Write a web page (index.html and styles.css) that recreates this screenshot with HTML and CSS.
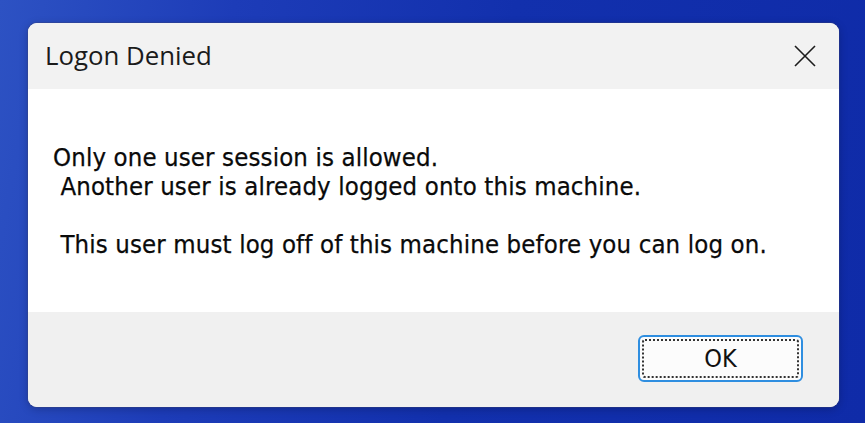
FILE: index.html
```html
<!DOCTYPE html>
<html lang="en">
<head>
<meta charset="utf-8">
<title>Logon Denied</title>
<link rel="stylesheet" href="styles.css">
</head>
<body>
<div class="desktop">
  <div class="dialog">
    <div class="titlebar">
      <span class="title">Logon Denied</span>
      <span class="close" aria-label="Close">
        <svg width="24" height="24" viewBox="0 0 24 24"><path d="M2 2 L22 22 M22 2 L2 22" stroke="#1c1c1c" stroke-width="1.6" fill="none"/></svg>
      </span>
    </div>
    <div class="content">
      <p class="msg">Only one user session is allowed.
 Another user is already logged onto this machine.

 This user must log off of this machine before you can log on.</p>
    </div>
    <div class="footer">
      <button class="ok"><span class="focus">OK</span></button>
    </div>
  </div>
</div>
</body>
</html>
```
FILE: styles.css
```css
html, body {
  margin: 0;
  padding: 0;
}
body {
  width: 865px;
  height: 423px;
  overflow: hidden;
  background: linear-gradient(100deg, #2d52c3 0%, #1d3cb8 25%, #1230ad 55%, #0f2ba8 100%);
}
.desktop {
  padding: 23px 0 0 28px;
}
.dialog {
  width: 811px;
  height: 384px;
  border-radius: 9px;
  overflow: hidden;
  display: flex;
  flex-direction: column;
  background: #f0f0f0;
  box-shadow: 0 0 0 1px rgba(60,70,120,0.35), 0 2px 8px rgba(0,0,20,0.25);
}
.titlebar {
  height: 66px;
  background: #f2f2f2;
  display: flex;
  align-items: center;
  justify-content: space-between;
  padding: 0 22px 0 17px;
}
.title {
  font-family: "Open Sans", "Noto Sans", sans-serif;
  font-size: 25.8px;
  color: #1b1b1b;
  padding-bottom: 2px;
}
.close {
  display: flex;
  width: 24px;
  height: 24px;
}
.content {
  height: 223px;
  background: #ffffff;
  box-sizing: border-box;
  padding: 54px 0 0 25px;
}
.msg {
  margin: 0;
  white-space: pre;
  font-family: "DejaVu Sans Condensed", "DejaVu Sans", sans-serif;
  font-stretch: condensed;
  font-size: 25.5px;
  letter-spacing: 0.14px;
  line-height: 29px;
  color: #0a0a0a;
  -webkit-text-stroke: 0.25px #0a0a0a;
}
.footer {
  flex: 1;
  background: #f0f0f0;
  display: flex;
  justify-content: flex-end;
  align-items: flex-start;
  padding: 23px 36px 0 0;
}
.ok {
  width: 165px;
  height: 47px;
  box-sizing: border-box;
  border: 2px solid #2f8ee0;
  border-radius: 6px;
  background: #fcfcfc;
  padding: 2px;
  display: flex;
  cursor: default;
}
.focus {
  flex: 1;
  display: flex;
  align-items: center;
  justify-content: center;
  border: 2px dotted #333333;
  border-radius: 3px;
  font-family: "DejaVu Sans Condensed", "DejaVu Sans", sans-serif;
  font-stretch: condensed;
  font-size: 25px;
  color: #111111;
}
```
